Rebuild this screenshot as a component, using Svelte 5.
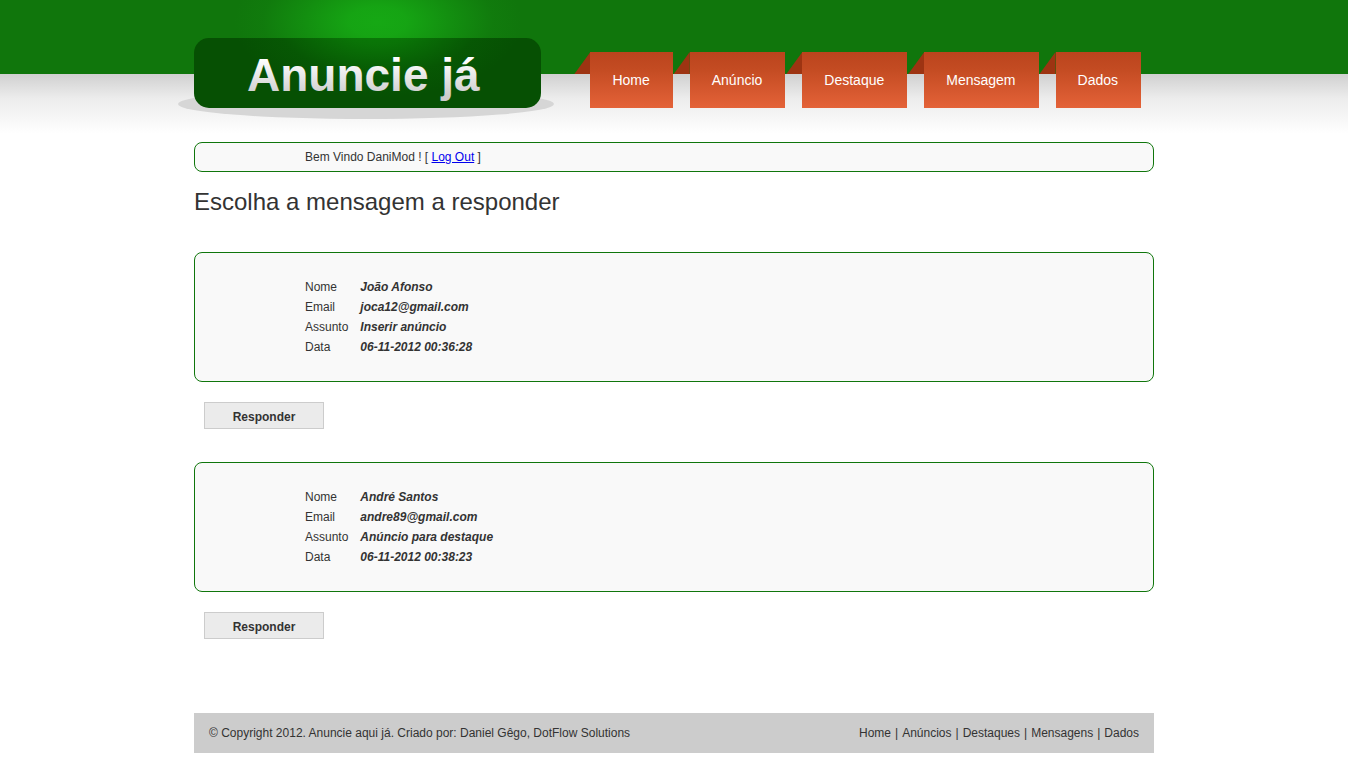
<script lang="ts">
	const menu = ['Home', 'Anúncio', 'Destaque', 'Mensagem', 'Dados'];
	const footerLinks = ['Home', 'Anúncios', 'Destaques', 'Mensagens', 'Dados'];

	const messages = [
		{
			id: 1,
			nome: 'João Afonso',
			email: 'joca12@gmail.com',
			assunto: 'Inserir anúncio',
			data: '06-11-2012 00:36:28'
		},
		{
			id: 2,
			nome: 'André Santos',
			email: 'andre89@gmail.com',
			assunto: 'Anúncio para destaque',
			data: '06-11-2012 00:38:23'
		}
	];
</script>

<div class="page">
	<header class="container header">
		<a href="#home" class="logo" aria-label="Anuncie já">
			<svg width="376" height="120" viewBox="0 0 376 120">
				<defs>
					<radialGradient id="glow">
						<stop offset="0" stop-color="#16a814" />
						<stop offset="0.2" stop-color="#16a814" stop-opacity="0.92" />
						<stop offset="0.5" stop-color="#16a814" stop-opacity="0.5" />
						<stop offset="0.8" stop-color="#16a814" stop-opacity="0.1" />
						<stop offset="1" stop-color="#16a814" stop-opacity="0" />
					</radialGradient>
					<radialGradient id="sheen">
						<stop offset="0" stop-color="#0b7f08" />
						<stop offset="0.3" stop-color="#0b7f08" stop-opacity="0.75" />
						<stop offset="0.7" stop-color="#0b7f08" stop-opacity="0.15" />
						<stop offset="1" stop-color="#0b7f08" stop-opacity="0" />
					</radialGradient>
					<linearGradient id="letters" x1="0" y1="0" x2="0" y2="1">
						<stop offset="0.2" stop-color="#ffffff" />
						<stop offset="0.9" stop-color="#cccccc" />
					</linearGradient>
					<clipPath id="band"><rect width="376" height="74" /></clipPath>
					<clipPath id="plate"><rect x="16" y="38" width="347" height="70" rx="15" /></clipPath>
				</defs>
				<ellipse cx="200" cy="22" rx="144" ry="76" fill="url(#glow)" clip-path="url(#band)" />
				<ellipse cx="188" cy="104" rx="188" ry="15" fill="#d6d6d6" />
				<rect x="16" y="38" width="347" height="70" rx="15" fill="#065003" />
				<ellipse cx="200" cy="22" rx="144" ry="76" fill="url(#sheen)" clip-path="url(#plate)" />
				<text x="69" y="91" class="logo-text" fill="url(#letters)">Anuncie já</text>
			</svg>
		</a>
		<nav class="menu">
			{#each menu as item}
				<a href="#{item.toLowerCase()}">{item}</a>
			{/each}
		</nav>
	</header>

	<main class="container">
		<div class="box welcome">
			Bem Vindo DaniMod ! [ <a href="#logout">Log Out</a> ]
		</div>

		<h1>Escolha a mensagem a responder</h1>

		{#each messages as message (message.id)}
			<form class="message" onsubmit={(e) => e.preventDefault()}>
				<div class="box details">
					<table>
						<tbody>
							<tr><th scope="row">Nome</th><td>{message.nome}</td></tr>
							<tr><th scope="row">Email</th><td>{message.email}</td></tr>
							<tr><th scope="row">Assunto</th><td>{message.assunto}</td></tr>
							<tr><th scope="row">Data</th><td>{message.data}</td></tr>
						</tbody>
					</table>
				</div>
				<button type="submit">Responder</button>
			</form>
		{/each}
	</main>

	<footer class="container footer">
		<span>© Copyright 2012. Anuncie aqui já. Criado por: Daniel Gêgo, DotFlow Solutions</span>
		<nav class="footer-nav">
			{#each footerLinks as link, i}
				{#if i > 0}<span>|</span>{/if}
				<a href="#{link.toLowerCase()}">{link}</a>
			{/each}
		</nav>
	</footer>
</div>

<style>
	:global(body) {
		margin: 0;
		background: #fff;
	}

	.page {
		padding-bottom: 20px;
		font-family: Arial, 'Liberation Sans', sans-serif;
		font-size: 12px;
		line-height: 20px;
		color: #333;
		background: linear-gradient(#10760c 74px, #d0d0d0 74px, #ececec 98px, #fff 134px);
	}

	.container {
		box-sizing: border-box;
		max-width: 960px;
		margin: 0 auto;
	}

	.header {
		display: flex;
		justify-content: space-between;
		align-items: flex-start;
		padding-right: 13px;
		min-height: 142px;
	}

	.logo {
		margin-left: -16px;
	}

	.logo svg {
		display: block;
	}

	.logo-text {
		font-size: 46px;
		font-weight: bold;
	}

	.menu {
		display: flex;
		gap: 17px;
		padding-top: 52px;
	}

	.menu a {
		position: relative;
		padding: 0 23px 0 22px;
		font-size: 14px;
		line-height: 56px;
		color: #fff;
		text-decoration: none;
		background: linear-gradient(#bb441d, #c34b22 30%, #e46238);
	}

	/* folded ribbon corner */
	.menu a::before {
		content: '';
		position: absolute;
		top: 0;
		right: 100%;
		width: 16px;
		height: 22px;
		background: #9d3412;
		clip-path: polygon(100% 0, 100% 100%, 0 100%);
	}

	.box {
		padding: 4px 110px;
		border: 1px solid #10760c;
		border-radius: 8px;
		background: #f9f9f9;
	}

	.welcome a {
		color: #0000ee;
	}

	h1 {
		margin: 15px 0 35px;
		font-size: 24px;
		font-weight: normal;
		line-height: 30px;
	}

	.message {
		margin-bottom: 33px;
	}

	.details {
		padding: 24px 110px;
	}

	table {
		border-collapse: collapse;
	}

	th,
	td {
		padding: 0;
		text-align: left;
	}

	th {
		padding-right: 12px;
		font-weight: normal;
	}

	td {
		font-weight: bold;
		font-style: italic;
	}

	button {
		display: block;
		width: 120px;
		height: 27px;
		margin: 20px 0 0 10px;
		padding: 2px 0 0;
		border: 1px solid #ccc;
		font: bold 12px Arial, 'Liberation Sans', sans-serif;
		color: #333;
		background: #ebebeb;
		cursor: pointer;
	}

	.footer {
		display: flex;
		justify-content: space-between;
		gap: 20px;
		margin-top: 74px;
		padding: 10px 15px;
		background: #ccc;
	}

	.footer-nav {
		display: flex;
		gap: 4px;
	}

	.footer a {
		color: #333;
		text-decoration: none;
	}
</style>
